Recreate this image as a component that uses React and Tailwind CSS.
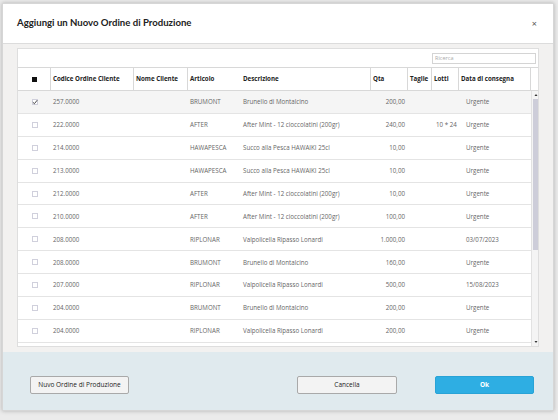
import React from "react";

const rows = [
  ["257.0000", "", "BRUMONT", "Brunello di Montalcino", "200,00", "", "", "Urgente", true],
  ["222.0000", "", "AFTER", "After Mint - 12 cioccolatini (200gr)", "240,00", "", "10 * 24", "Urgente"],
  ["214.0000", "", "HAWAPESCA", "Succo alla Pesca HAWAIKI 25cl", "10,00", "", "", "Urgente"],
  ["213.0000", "", "HAWAPESCA", "Succo alla Pesca HAWAIKI 25cl", "10,00", "", "", "Urgente"],
  ["212.0000", "", "AFTER", "After Mint - 12 cioccolatini (200gr)", "10,00", "", "", "Urgente"],
  ["210.0000", "", "AFTER", "After Mint - 12 cioccolatini (200gr)", "100,00", "", "", "Urgente"],
  ["208.0000", "", "RIPLONAR", "Valpolicella Ripasso Lonardi", "1.000,00", "", "", "03/07/2023"],
  ["208.0000", "", "BRUMONT", "Brunello di Montalcino", "160,00", "", "", "Urgente"],
  ["207.0000", "", "RIPLONAR", "Valpolicella Ripasso Lonardi", "500,00", "", "", "15/08/2023"],
  ["204.0000", "", "BRUMONT", "Brunello di Montalcino", "200,00", "", "", "Urgente"],
  ["204.0000", "", "RIPLONAR", "Valpolicella Ripasso Lonardi", "200,00", "", "", "Urgente"],
];

function Check({ checked }) {
  return (
    <div className="w-[6px] h-[6px] border border-[#d0d0dc] bg-white flex items-center justify-center">
      {checked && (
        <svg width="6" height="6" viewBox="0 0 6 6" className="overflow-visible">
          <path d="M0.8 3.2 L2.4 4.7 L5.2 1.2" fill="none" stroke="#333" strokeWidth="0.9" />
        </svg>
      )}
    </div>
  );
}

export default function App() {
  const font = { fontFamily: '"Open Sans", "Noto Sans", sans-serif' };
  return (
    <div className="w-[558px] h-[420px] bg-[#ebebeb] pt-[3px] pl-[2px] overflow-hidden" style={font}>
      <div className="w-[552px] h-[408px] bg-white flex flex-col shadow-[0_0_4px_rgba(0,0,0,0.25)] border border-[#d6d6d6]">
        {/* Header */}
        <div className="h-[40px] shrink-0 flex items-center justify-between pl-[14px] pr-[16px] border-b border-[#dcdcdc]">
          <div className="text-[9.6px] font-bold text-[#222] font-['Lato',sans-serif]">Aggiungi un Nuovo Ordine di Produzione</div>
          <div className="text-[9px] text-[#555] leading-none">×</div>
        </div>
        {/* Body */}
        <div className="flex-1 bg-[#f2f1f0] px-[14px] pt-[4px] pb-[5px] flex flex-col">
          <div className="flex-1 bg-white border border-[#dedede] flex flex-col overflow-hidden">
            {/* Search row */}
            <div className="h-[18px] shrink-0 flex items-center justify-end pr-[2px]">
              <div className="w-[104px] h-[11px] border border-[#d4d4d4] flex items-center pl-[2px] text-[5.5px] text-[#aaa]">Ricerca</div>
            </div>
            {/* Header row */}
            <div className="h-[24px] shrink-0 flex border-t border-b border-[#d8d8d8] text-[6.2px] font-bold text-[#222]">
              <div className="w-[33px] flex items-center justify-center border-r border-[#d8d8d8]">
                <div className="w-[5px] h-[5px] bg-[#111]"></div>
              </div>
              <div className="w-[83px] flex items-center pl-[2px] border-r border-[#d8d8d8]">Codice Ordine Cliente</div>
              <div className="w-[54px] flex items-center pl-[2px] border-r border-[#d8d8d8]">Nome Cliente</div>
              <div className="w-[53px] flex items-center pl-[2px]">Articolo</div>
              <div className="w-[130px] flex items-center pl-[2px] border-r border-[#d8d8d8]">Descrizione</div>
              <div className="w-[37px] flex items-center pl-[2px] border-r border-[#d8d8d8]">Qta</div>
              <div className="w-[24px] flex items-center pl-[2px] border-r border-[#d8d8d8]">Taglie</div>
              <div className="w-[27px] flex items-center pl-[2px] border-r border-[#d8d8d8]">Lotti</div>
              <div className="w-[72px] flex items-center pl-[2px] border-r border-[#d8d8d8]">Data di consegna</div>
              <div className="flex-1"></div>
            </div>
            {/* Rows + scrollbar */}
            <div className="flex-1 flex min-h-0">
              <div className="flex-1 flex flex-col text-[6.2px] text-[#666]">
                {rows.map((r, i) => (
                  <div
                    key={i}
                    className={
                      "h-[22.9px] shrink-0 flex items-center border-b border-[#e4e4e4] " +
                      (r[8] ? "bg-[#f5f5f5]" : "bg-white")
                    }
                  >
                    <div className="w-[33px] flex justify-center"><Check checked={r[8]} /></div>
                    <div className="w-[83px] pl-[2px]">{r[0]}</div>
                    <div className="w-[54px] pl-[2px]">{r[1]}</div>
                    <div className="w-[53px] pl-[2px]">{r[2]}</div>
                    <div className="w-[130px] pl-[2px] whitespace-nowrap">{r[3]}</div>
                    <div className="w-[37px] pr-[3px] text-right">{r[4]}</div>
                    <div className="w-[24px] pl-[2px]">{r[5]}</div>
                    <div className="w-[27px] pl-[4px] whitespace-nowrap">{r[6]}</div>
                    <div className="w-[72px] pl-[7px]">{r[7]}</div>
                  </div>
                ))}
              </div>
              <div className="w-[8px] shrink-0 bg-[#f4f4f4] border-l border-[#e2e2e2] flex flex-col items-center">
                <svg width="4" height="6" viewBox="0 0 4 6" className="mt-[1px]">
                  <path d="M0.5 4 L2 2 L3.5 4 Z" fill="#333" />
                </svg>
                <div className="w-[6px] h-[151px] bg-[#cdcdd9] mt-[1px]"></div>
                <div className="flex-1"></div>
                <svg width="4" height="6" viewBox="0 0 4 6" className="mb-[1px]">
                  <path d="M0.5 2 L2 4 L3.5 2 Z" fill="#333" />
                </svg>
              </div>
            </div>
          </div>
        </div>
        {/* Footer */}
        <div className="h-[58px] shrink-0 bg-[#e0eaee] flex items-center pl-[27px] pr-[19px] pt-[8px]">
          <button className="w-[99px] h-[18px] bg-[#f3f3f3] border border-[#a9a9a9] rounded-[2px] text-[6.5px] text-[#222]">Nuvo Ordine di Produzione</button>
          <div className="flex-1"></div>
          <button className="w-[100px] h-[18px] bg-[#f3f3f3] border border-[#a9a9a9] rounded-[2px] text-[6.5px] text-[#222]">Cancella</button>
          <div className="w-[38px]"></div>
          <button className="w-[99px] h-[18px] bg-[#2eaee3] border border-[#29a3d6] rounded-[2px] text-[6.5px] font-bold text-white">Ok</button>
        </div>
      </div>
    </div>
  );
}
